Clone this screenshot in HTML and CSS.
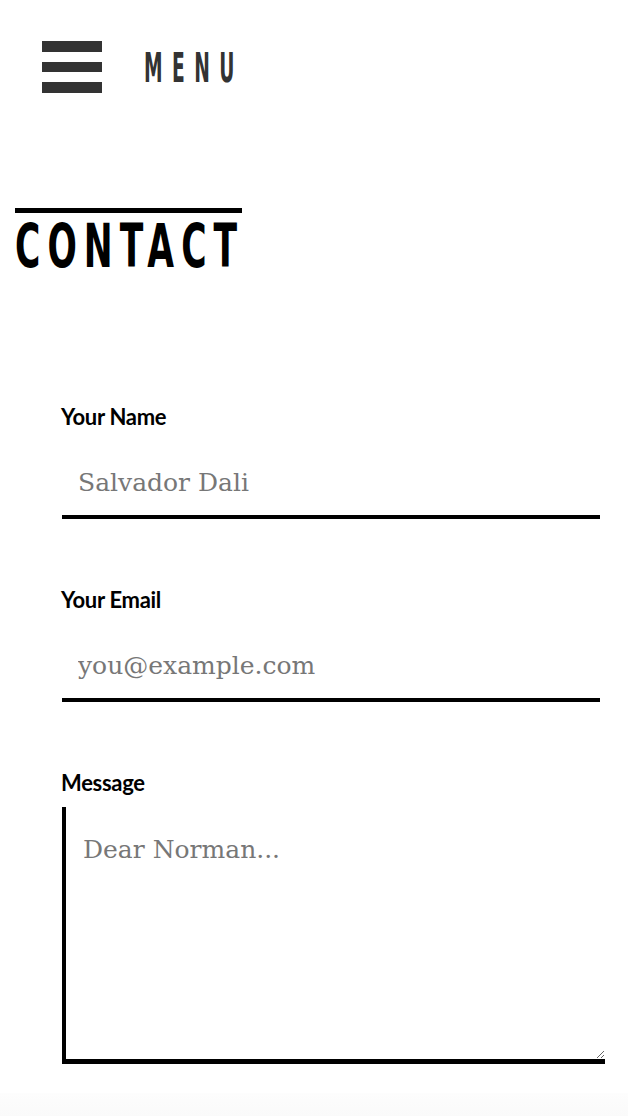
FILE: index.html
```html
<!DOCTYPE html>
<html>
<head>
<meta charset="utf-8">
<link rel="stylesheet" href="styles.css">
</head>
<body>
<header class="topbar">
  <button class="menu-btn">
    <span class="burger"><span></span><span></span><span></span></span>
    <span class="menu-label">MENU</span>
  </button>
</header>
<main class="page">
  <h1 class="title"><span class="title-text">CONTACT</span></h1>
  <form class="form">
    <div class="field">
      <label class="label">Your Name</label>
      <input class="input" type="text" placeholder="Salvador Dali">
    </div>
    <div class="field">
      <label class="label">Your Email</label>
      <input class="input" type="email" placeholder="you@example.com">
    </div>
    <div class="field">
      <label class="label">Message</label>
      <textarea class="textarea" placeholder="Dear Norman..."></textarea>
    </div>
  </form>
</main>
<div class="foot"></div>
</body>
</html>
```
FILE: styles.css
```css
html, body { margin: 0; padding: 0; background: #fff; }
body { width: 628px; height: 1116px; overflow: hidden; position: relative; }

.topbar { padding: 41px 0 0 42px; height: 75px; }
.menu-btn {
  display: flex; align-items: center; gap: 42px;
  background: none; border: 0; padding: 0; margin: 0; cursor: pointer;
}
.burger { display: flex; flex-direction: column; gap: 10px; width: 60px; }
.burger span { display: block; height: 10.5px; background: #333; }
.menu-label {
  font-family: "DejaVu Sans Condensed", sans-serif;
  font-weight: 700; font-size: 40px; line-height: 40px; color: #333; letter-spacing: 18px;
  display: inline-block; transform: scaleX(0.52); transform-origin: left center;
  margin-top: 2px;
}

.title {
  margin: 92px 0 0 15px; width: 227px; display: block;
  border-top: 5px solid #000; padding-top: 8px;
  font-family: "DejaVu Sans Condensed", sans-serif;
  font-weight: 700; font-size: 60px; line-height: 50px; color: #000;
  white-space: nowrap;
}
.title-text {
  display: inline-block; letter-spacing: 11px;
  transform: scaleX(0.64); transform-origin: left center;
}

.form { padding: 134px 28px 0 62px; display: flex; flex-direction: column; gap: 69px; }
.field { display: flex; flex-direction: column; }
.label {
  font-family: Lato, sans-serif; font-weight: 700; font-size: 22px;
  letter-spacing: -0.3px; color: #000; line-height: 24px; margin-left: -1px;
}
.input {
  font-family: "DejaVu Serif", serif; font-size: 25px; line-height: 29px; height: 29px;
  color: #333; border: 0; border-bottom: 4px solid #000; outline: none;
  padding: 27px 16px 18px; margin: 12px 0 0; box-sizing: content-box;
  background: transparent;
}
.input::placeholder, .textarea::placeholder { color: #777; }
.textarea {
  font-family: "DejaVu Serif", serif; font-size: 25px; line-height: 29px; color: #333;
  border: 0; border-left: 4px solid #000; border-bottom: 5px solid #000;
  outline: none; margin: 12px -5px 0 0; padding: 28px 17px;
  height: 257px; box-sizing: border-box; resize: vertical; background: transparent;
}
.foot { position: absolute; left: 0; right: 0; bottom: 0; height: 23px; background: linear-gradient(#fdfdfd, #fafafa); }
```
